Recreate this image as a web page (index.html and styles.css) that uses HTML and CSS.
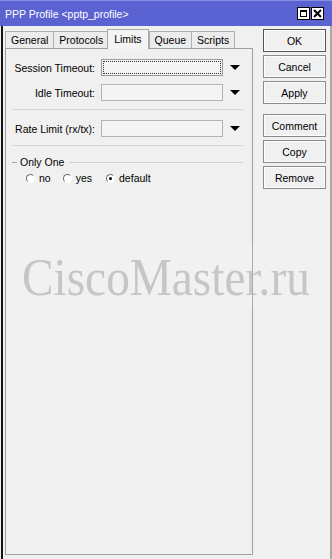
FILE: index.html
```html
<!DOCTYPE html>
<html lang="en">
<head>
    <meta charset="UTF-8">
    <meta name="viewport" content="width=device-width, initial-scale=1.0">
    <title>PPP Profile</title>
    <link rel="stylesheet" href="styles.css">
</head>
<body>
    <div class="window">
        <div class="titlebar">
            <span class="title">PPP Profile &lt;pptp_profile&gt;</span>
            <div class="title-btns">
                <span class="tbtn"><span class="max-icon"></span></span>
                <span class="tbtn">
                    <svg width="9" height="9" viewBox="0 0 9 9">
                        <path d="M1 1 L8 8 M8 1 L1 8" stroke="#000" stroke-width="2"/>
                    </svg>
                </span>
            </div>
        </div>

        <div class="client">
            <div class="main">
                <div class="tabs">
                    <div class="tab">General</div>
                    <div class="tab">Protocols</div>
                    <div class="tab active">Limits</div>
                    <div class="tab">Queue</div>
                    <div class="tab">Scripts</div>
                </div>

                <div class="panel">
                    <div class="row">
                        <label class="label">Session Timeout:</label>
                        <div class="input focus"><span class="focus-rect"></span></div>
                        <span class="arrow"></span>
                    </div>
                    <div class="row">
                        <label class="label">Idle Timeout:</label>
                        <div class="input"></div>
                        <span class="arrow"></span>
                    </div>

                    <div class="separator"></div>

                    <div class="row">
                        <label class="label">Rate Limit (rx/tx):</label>
                        <div class="input"></div>
                        <span class="arrow"></span>
                    </div>

                    <div class="separator"></div>

                    <div class="group">
                        <div class="group-title">
                            <span class="dash"></span>
                            <span>Only One</span>
                            <span class="line"></span>
                        </div>
                        <div class="radios">
                            <span class="radio"><span class="dot"></span>no</span>
                            <span class="radio"><span class="dot"></span>yes</span>
                            <span class="radio checked"><span class="dot"></span>default</span>
                        </div>
                    </div>
                </div>
            </div>

            <div class="actions">
                <button class="btn default">OK</button>
                <button class="btn">Cancel</button>
                <button class="btn">Apply</button>
                <button class="btn spaced">Comment</button>
                <button class="btn">Copy</button>
                <button class="btn">Remove</button>
            </div>
        </div>

        <div class="watermark"><span>CiscoMaster.ru</span></div>
    </div>
</body>
</html>
```

FILE: styles.css
```css
body {
    margin: 0;
    font-family: 'Liberation Sans', Arial, sans-serif;
    font-size: 10.5px;
    color: #000;
    background: #f0f0f0;
}

.window {
    position: relative;
    width: 332px;
    height: 559px;
    overflow: hidden;
    background: #f0f0f0;
}

.titlebar {
    height: 26px;
    background: #5b62d2;
    border-top: 1px solid #8a90e0;
    box-sizing: border-box;
    display: flex;
    align-items: center;
    justify-content: space-between;
    padding: 0 8px 0 5px;
}

.title {
    color: #fff;
    font-size: 10.5px;
}

.title-btns {
    display: flex;
    gap: 1px;
}

.tbtn {
    width: 13px;
    height: 13px;
    box-sizing: border-box;
    background: #fff;
    border: 1px solid #000;
    display: flex;
    align-items: center;
    justify-content: center;
}

.max-icon {
    width: 7px;
    height: 7px;
    border: 1px solid #000;
    border-top-width: 2px;
    box-sizing: border-box;
}

.client {
    display: flex;
    height: 533px;
    margin-left: 1px;
    border-left: 2px solid #151515;
    border-right: 2px solid #a8a8a8;
    box-sizing: border-box;
}

.main {
    width: 248px;
    margin-left: 2px;
    display: flex;
    flex-direction: column;
    padding-bottom: 4px;
}

.tabs {
    display: flex;
    align-items: flex-end;
    height: 22px;
}

.tab {
    height: 17px;
    line-height: 16px;
    padding: 0 5px;
    border: 1px solid #b0b0b0;
    border-bottom: none;
    margin-right: -1px;
    box-sizing: border-box;
    background: #ececec;
}

.tab.active {
    height: 20px;
    line-height: 18px;
    background: #f4f4f4;
    margin: 0 0 -1px -1px;
    padding: 0 6px;
    position: relative;
    z-index: 1;
    border-color: #a8a8a8;
}

.panel {
    flex: 1;
    border: 1px solid #a0a0a0;
    background: #f0f0f0;
    padding: 10px 0 0 0;
}

.row {
    display: flex;
    align-items: center;
    height: 17px;
    margin-bottom: 8px;
}

.label {
    width: 95px;
    text-align: right;
    padding-right: 6px;
    box-sizing: border-box;
}

.input {
    width: 122px;
    height: 17px;
    box-sizing: border-box;
    border: 1px solid #b4b4b4;
    background: #f4f4f4;
    padding: 1px;
}

.input.focus {
    border-color: #9a9a9a;
}

.focus-rect {
    display: block;
    height: 100%;
    border: 1px dotted #333;
    box-sizing: border-box;
}

.arrow {
    margin-left: 7px;
    width: 0;
    height: 0;
    border-left: 5px solid transparent;
    border-right: 5px solid transparent;
    border-top: 5px solid #000;
}

.separator {
    height: 1px;
    background: #d6d6d6;
    margin: 2px 9px 10px 6px;
}

.group {
    padding: 0 9px 0 6px;
    margin-top: 8px;
}

.group-title {
    display: flex;
    align-items: center;
    gap: 3px;
    height: 12px;
}

.dash {
    width: 5px;
    height: 1px;
    background: #a8a8a8;
}

.line {
    flex: 1;
    height: 1px;
    background: #d0d0d0;
    margin-left: 2px;
}

.radios {
    display: flex;
    gap: 12px;
    margin-top: 4px;
    padding-left: 14px;
}

.radio {
    display: flex;
    align-items: center;
    gap: 4px;
}

.radio.checked {
    margin-left: 2px;
}

.dot {
    width: 9px;
    height: 9px;
    border-radius: 50%;
    box-sizing: border-box;
    border: 1px solid #6d6d6d;
    border-right-color: #fff;
    border-bottom-color: #fff;
    background: #fff;
    display: flex;
    align-items: center;
    justify-content: center;
}

.radio.checked .dot::after {
    content: "";
    width: 3px;
    height: 3px;
    border-radius: 50%;
    background: #000;
}

.actions {
    display: flex;
    flex-direction: column;
    gap: 3px;
    margin-left: 10px;
    padding-top: 3px;
}

.btn {
    width: 63px;
    height: 23px;
    font-family: 'Liberation Sans', Arial, sans-serif;
    font-size: 10.5px;
    color: #000;
    background: #f0f0f0;
    border: 1px solid #8c8c8c;
    box-shadow: inset 0 0 0 1px #fdfdfd;
    padding: 0;
}

.btn.default {
    border-color: #555;
}

.btn.spaced {
    margin-top: 7px;
}

.watermark {
    position: absolute;
    left: 10px;
    top: 246px;
    width: 310px;
    height: 64px;
    background: rgba(255, 255, 255, 0.12);
    pointer-events: none;
}

.watermark span {
    display: block;
    font-family: 'Liberation Serif', 'Times New Roman', serif;
    font-size: 52px;
    line-height: 64px;
    color: rgba(180, 180, 180, 0.7);
    transform: scaleX(0.91);
    transform-origin: left center;
    margin-left: 12px;
    white-space: nowrap;
}
```
